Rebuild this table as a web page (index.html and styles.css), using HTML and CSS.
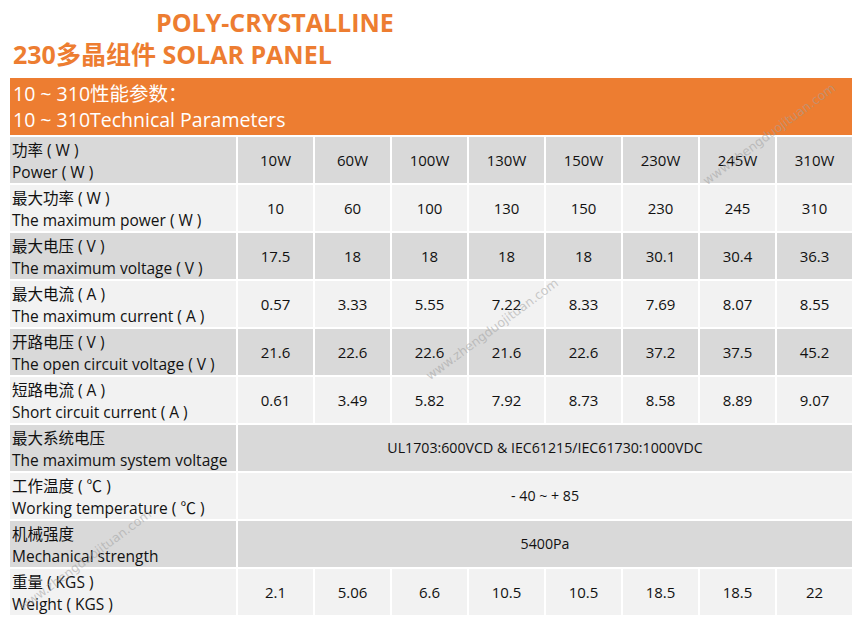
FILE: index.html
```html
<!DOCTYPE html>
<html lang="zh-CN">
<head>
<meta charset="utf-8">
<title>POLY-CRYSTALLINE 230多晶组件 SOLAR PANEL</title>
<link rel="stylesheet" href="styles.css">
</head>
<body>
<div class="page">
  <h1 class="title">
    <span class="title-line first">POLY-CRYSTALLINE</span>
    <span class="title-line">230多晶组件 SOLAR PANEL</span>
  </h1>
  <table class="spec">
    <colgroup>
      <col class="c-label">
      <col class="c-val"><col class="c-val"><col class="c-val"><col class="c-val">
      <col class="c-val"><col class="c-val"><col class="c-val"><col class="c-val">
    </colgroup>
    <thead>
      <tr><th class="banner" colspan="9">10 ~ 310性能参数：<br>10 ~ 310Technical Parameters</th></tr>
    </thead>
    <tbody>
      <tr class="dark"><td class="label">功率 ( W )<br>Power ( W )</td><td>10W</td><td>60W</td><td>100W</td><td>130W</td><td>150W</td><td>230W</td><td>245W</td><td>310W</td></tr>
      <tr class="light"><td class="label">最大功率 ( W )<br>The maximum power ( W )</td><td>10</td><td>60</td><td>100</td><td>130</td><td>150</td><td>230</td><td>245</td><td>310</td></tr>
      <tr class="dark"><td class="label">最大电压 ( V )<br>The maximum voltage ( V )</td><td>17.5</td><td>18</td><td>18</td><td>18</td><td>18</td><td>30.1</td><td>30.4</td><td>36.3</td></tr>
      <tr class="light"><td class="label">最大电流 ( A )<br>The maximum current ( A )</td><td>0.57</td><td>3.33</td><td>5.55</td><td>7.22</td><td>8.33</td><td>7.69</td><td>8.07</td><td>8.55</td></tr>
      <tr class="dark"><td class="label">开路电压 ( V )<br>The open circuit voltage ( V )</td><td>21.6</td><td>22.6</td><td>22.6</td><td>21.6</td><td>22.6</td><td>37.2</td><td>37.5</td><td>45.2</td></tr>
      <tr class="light"><td class="label">短路电流 ( A )<br>Short circuit current ( A )</td><td>0.61</td><td>3.49</td><td>5.82</td><td>7.92</td><td>8.73</td><td>8.58</td><td>8.89</td><td>9.07</td></tr>
      <tr class="dark"><td class="label">最大系统电压<br>The maximum system voltage</td><td class="small" colspan="8">UL1703:600VCD &amp; IEC61215/IEC61730:1000VDC</td></tr>
      <tr class="light"><td class="label">工作温度 ( ℃ )<br>Working temperature ( ℃ )</td><td class="small" colspan="8">- 40 ~ + 85</td></tr>
      <tr class="dark"><td class="label">机械强度<br>Mechanical strength</td><td class="small" colspan="8">5400Pa</td></tr>
      <tr class="light"><td class="label">重量 ( KGS )<br>Weight ( KGS )</td><td>2.1</td><td>5.06</td><td>6.6</td><td>10.5</td><td>10.5</td><td>18.5</td><td>18.5</td><td>22</td></tr>
    </tbody>
  </table>
  <span class="wm wm1">www.zhengduojituan.com</span>
  <span class="wm wm2">www.zhengduojituan.com</span>
  <span class="wm wm3">www.zhengduojituan.com</span>
</div>
</body>
</html>
```
FILE: styles.css
```css
html, body {
  margin: 0;
  padding: 0;
  background: #ffffff;
}

body {
  margin: 8px;
  font-family: "Open Sans", "Noto Sans CJK SC", sans-serif;
  color: #111111;
}

.page {
  position: relative;
  width: 846px;
}

.title {
  margin: -2px 0 0;
  height: 70px;
  display: flex;
  flex-direction: column;
  font-size: 25px;
  font-weight: 700;
  line-height: 32px;
  color: #ed7d31;
}

.title-line {
  display: block;
  padding-left: 5px;
}

.title-line.first {
  padding-left: 148px;
}

.spec {
  border-collapse: separate;
  border-spacing: 2px;
  table-layout: fixed;
  width: 846px;
}

.c-label { width: 226px; }
.c-val { width: 75px; }

.banner {
  background: #ed7d31;
  color: #ffffff;
  font-weight: 400;
  text-align: left;
  font-size: 19.5px;
  line-height: 26px;
  height: 57px;
  padding: 0 3px 0;
  box-sizing: border-box;
  white-space: nowrap;
}

.spec td {
  height: 46px;
  padding: 0;
  box-sizing: border-box;
  text-align: center;
  vertical-align: middle;
  font-size: 15px;
  line-height: 22px;
}

.spec td.label {
  text-align: left;
  padding-left: 2px;
  padding-top: 1px;
  font-size: 15.5px;
  white-space: nowrap;
}

.spec td.small {
  font-size: 14.2px;
}

.dark td { background: #d9d9d9; }
.light td { background: #f2f2f2; }

.wm {
  position: absolute;
  font-family: "DejaVu Sans", sans-serif;
  font-size: 12.5px;
  color: rgba(160, 160, 160, 0.55);
  white-space: nowrap;
  transform: translate(-50%, -50%) rotate(-36.5deg);
  pointer-events: none;
}

.wm1 { left: 761px; top: 128px; }
.wm2 { left: 484px; top: 323px; }
.wm3 { left: 77px; top: 554px; }
```
